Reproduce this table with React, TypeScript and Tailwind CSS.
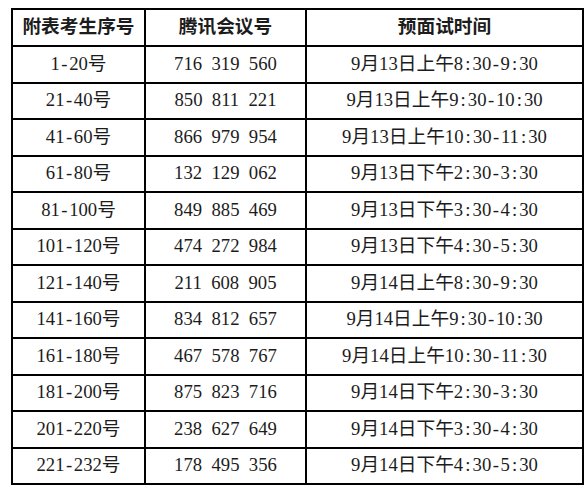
const rows: [string, string, string][] = [
  ["1-20号", "716 319 560", "9月13日上午8:30-9:30"],
  ["21-40号", "850 811 221", "9月13日上午9:30-10:30"],
  ["41-60号", "866 979 954", "9月13日上午10:30-11:30"],
  ["61-80号", "132 129 062", "9月13日下午2:30-3:30"],
  ["81-100号", "849 885 469", "9月13日下午3:30-4:30"],
  ["101-120号", "474 272 984", "9月13日下午4:30-5:30"],
  ["121-140号", "211 608 905", "9月14日上午8:30-9:30"],
  ["141-160号", "834 812 657", "9月14日上午9:30-10:30"],
  ["161-180号", "467 578 767", "9月14日上午10:30-11:30"],
  ["181-200号", "875 823 716", "9月14日下午2:30-3:30"],
  ["201-220号", "238 627 649", "9月14日下午3:30-4:30"],
  ["221-232号", "178 495 356", "9月14日下午4:30-5:30"],
];

// SimSun-like: colon, hyphen and space all take half an em
function Half({ text }: { text: string }) {
  return (
    <>
      {text.split(/([:\- ])/).map((part, i) =>
        part === ":" || part === "-" || part === " " ? (
          <span key={i} className="inline-block w-[0.5em] text-center">
            {part === " " ? "\u00a0" : part}
          </span>
        ) : (
          part
        )
      )}
    </>
  );
}

export default function App() {
  return (
    <div className="bg-white w-[587px] h-[487px] pt-[8px] pl-[11px]">
      <table
        className="table-fixed border-collapse w-[573px] text-[18.7px] text-[#1c1c1c]"
        style={{ fontFamily: '"Liberation Serif", "Noto Sans CJK SC", serif' }}
      >
        <colgroup>
          <col className="w-[133px]" />
          <col className="w-[161px]" />
          <col />
        </colgroup>
        <thead>
          <tr className="h-[37px]">
            {["附表考生序号", "腾讯会议号", "预面试时间"].map((h) => (
              <th key={h} className="border-2 border-black font-bold text-center p-0 leading-none">
                {h}
              </th>
            ))}
          </tr>
        </thead>
        <tbody>
          {rows.map(([no, id, time]) => (
            <tr key={no} className="h-[36.5px]">
              <td className="border-2 border-black text-center p-0 leading-none">
                <Half text={no} />
              </td>
              <td className="border-2 border-black text-center p-0 leading-none">
                <Half text={id} />
              </td>
              <td className="border-2 border-black text-center p-0 leading-none">
                <Half text={time} />
              </td>
            </tr>
          ))}
        </tbody>
      </table>
    </div>
  );
}
